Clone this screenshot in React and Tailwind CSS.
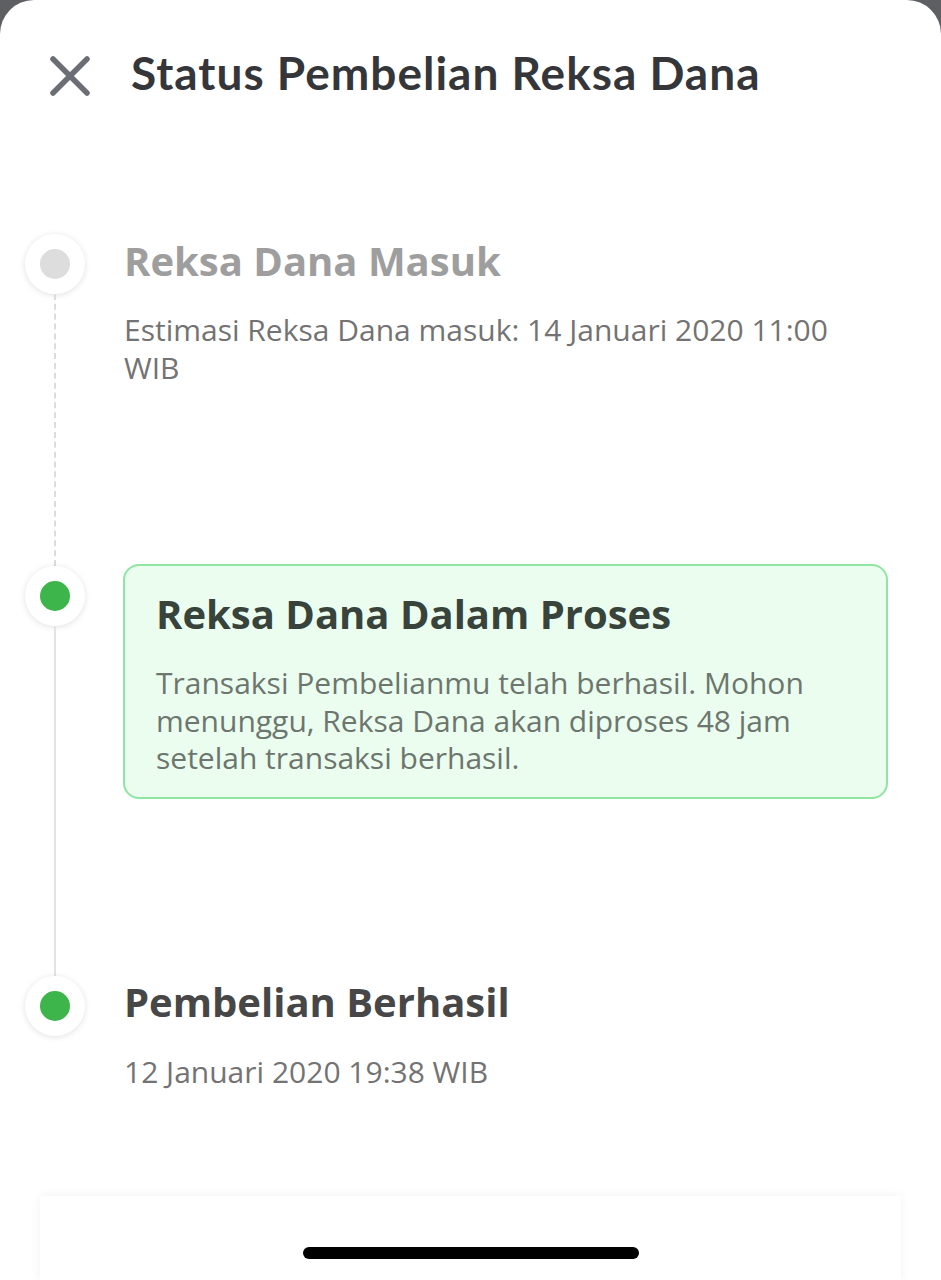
import React from 'react'

const body = { fontFamily: '"Open Sans", "Noto Sans", sans-serif' }

const Dot = ({ color }) => (
  <div className="flex h-[60px] w-[60px] shrink-0 items-center justify-center rounded-full bg-white shadow-[0_1px_6px_rgba(0,0,0,0.12)]">
    <div className={`h-[30px] w-[30px] rounded-full ${color}`} />
  </div>
)

const Step = ({ dot, line, height, children }) => (
  <div className="flex" style={{ height }}>
    <div className="w-[124px] shrink-0 pl-[25px]">
      <div className="flex h-full w-[60px] flex-col items-center">
        <Dot color={dot} />
        {line === 'dashed' && <div className="flex-1 border-l-2 border-dashed border-[#dcdcdc]" />}
        {line === 'solid' && <div className="w-[2px] flex-1 bg-[#e3e3e3]" />}
      </div>
    </div>
    <div className="flex-1 pr-[53px]">{children}</div>
  </div>
)

export default function App() {
  return (
    <div className="h-[1280px] w-[941px] overflow-hidden bg-[#5e5f63]">
      <div className="relative flex h-full flex-col rounded-t-[34px] bg-white" style={body}>
        <div className="flex h-[148px] items-start pt-[48px]">
          <div className="flex w-[131px] justify-start pl-[48px] pt-[3px]">
            <svg width="46" height="46" viewBox="0 0 46 46" fill="none">
              <path d="M5 8 L39 42 M39 8 L5 42" stroke="#6b6e75" strokeWidth="5.5" strokeLinecap="round" />
            </svg>
          </div>
          <h1
            className="text-[46px] font-bold leading-[50px] tracking-[1px] text-[#35363a]"
            style={{ fontFamily: 'Lato, "Open Sans", sans-serif' }}
          >
            Status Pembelian Reksa Dana
          </h1>
        </div>

        <div className="mt-[86px] flex flex-col">
          <Step dot="bg-[#dddddd]" line="dashed" height={332}>
            <h2 className="mt-[1px] text-[40px] font-bold leading-[52px] text-[#9e9e9e]">Reksa Dana Masuk</h2>
            <p className="mt-[24px] text-[30px] leading-[38px] text-[#737373]">
              Estimasi Reksa Dana masuk: 14 Januari 2020 11:00 WIB
            </p>
          </Step>

          <Step dot="bg-[#3db54a]" line="solid" height={410}>
            <div className="-ml-[1px] -mt-[2px] rounded-[16px] border-2 border-[#8ee6a2] bg-[#ebfdef] pb-[20px] pl-[31px] pr-[30px] pt-[23px]">
              <h2 className="text-[40px] font-bold leading-[50px] text-[#38443b]">Reksa Dana Dalam Proses</h2>
              <p className="mt-[25px] text-[30px] leading-[37.5px] text-[#6c766e]">
                Transaksi Pembelianmu telah berhasil. Mohon menunggu, Reksa Dana akan diproses 48 jam setelah transaksi berhasil.
              </p>
            </div>
          </Step>

          <Step dot="bg-[#3db54a]" line="none" height={220}>
            <h2 className="text-[40px] font-bold leading-[52px] text-[#474747]">Pembelian Berhasil</h2>
            <p className="mt-[25px] text-[30px] leading-[38px] text-[#737373]">12 Januari 2020 19:38 WIB</p>
          </Step>
        </div>

        <div className="mx-[40px] flex flex-1 items-start justify-center bg-white shadow-[0_0_10px_rgba(0,0,0,0.06)]">
          <div className="mt-[51px] h-[12px] w-[336px] rounded-full bg-black" />
        </div>
      </div>
    </div>
  )
}
